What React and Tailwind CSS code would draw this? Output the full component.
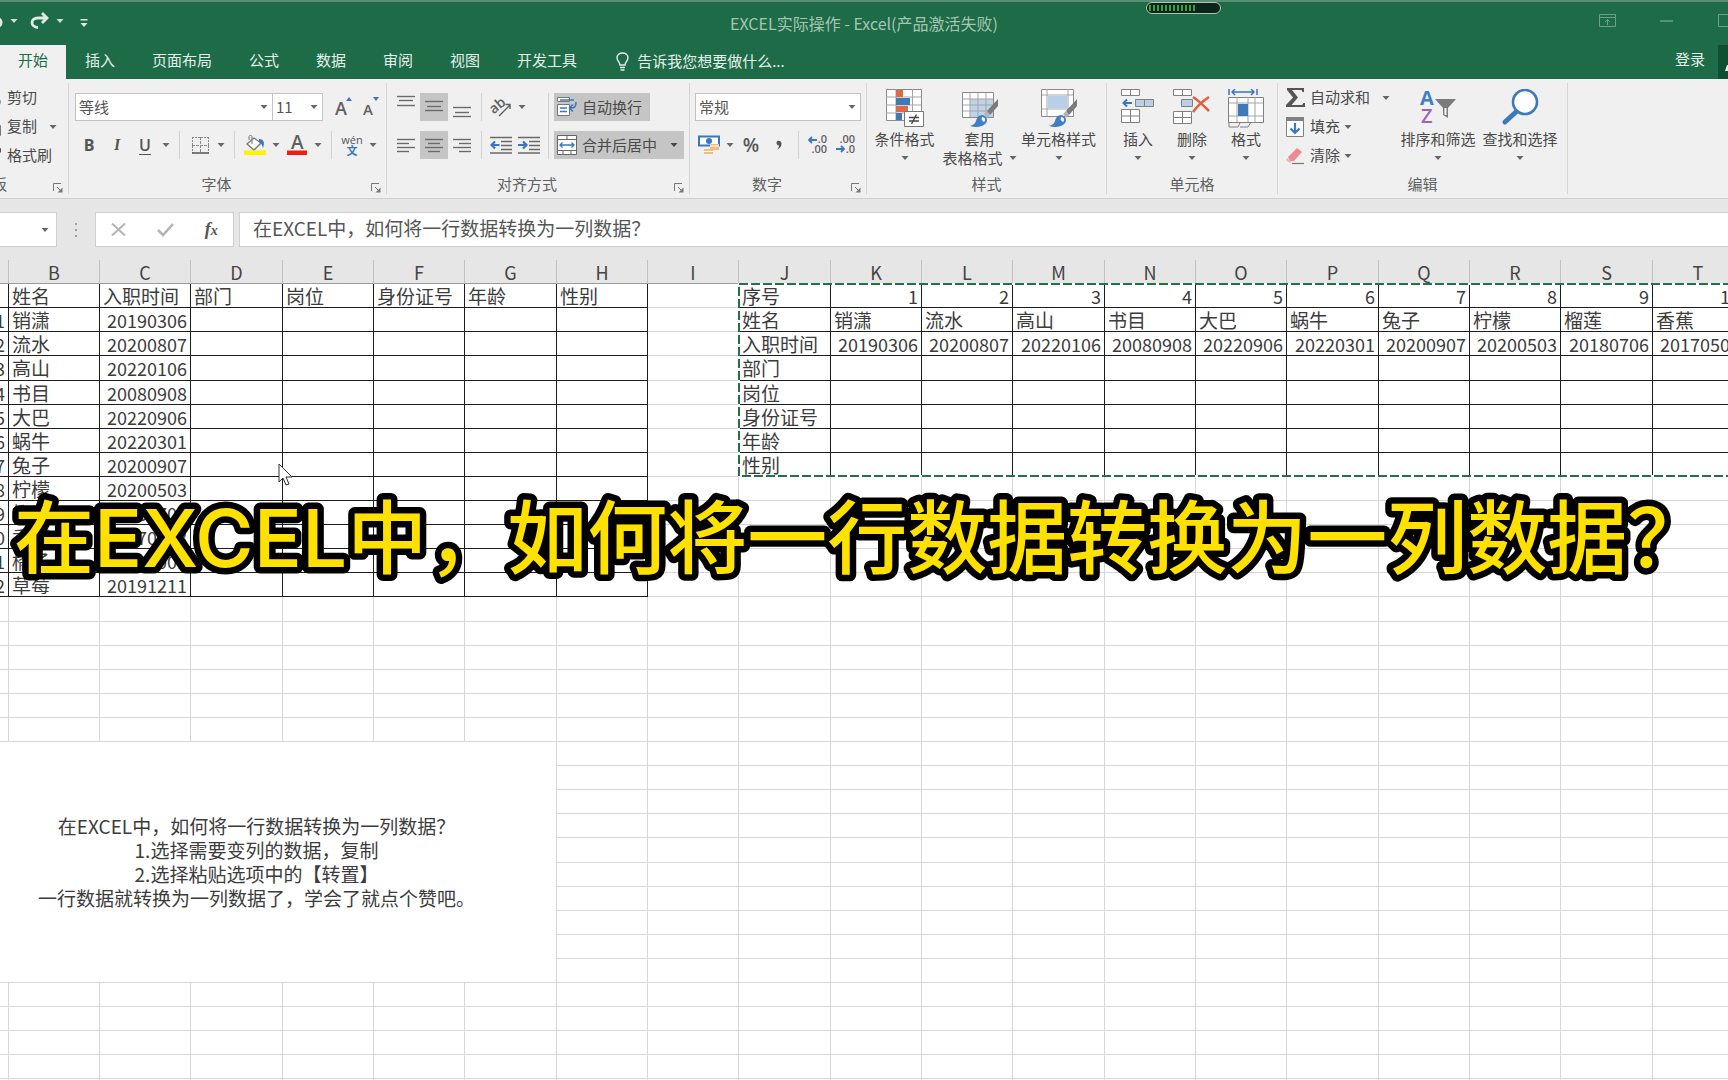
import React, { useState } from 'react';

const UI_FONT = "font-['Noto_Sans_CJK_SC',sans-serif]";

const COLUMNS = 'ABCDEFGHIJKLMNOPQRST'.split('');
// Three columns in a row share 274px
const COLUMN_WIDTHS = ['w-[91px]', 'w-[91px]', 'w-[92px]'];

const FIELDS = ['序号', '姓名', '入职时间', '部门', '岗位', '身份证号', '年龄', '性别'];

const PEOPLE = [
    ['销潇', 20190306],
    ['流水', 20200807],
    ['高山', 20220106],
    ['书目', 20080908],
    ['大巴', 20220906],
    ['蜗牛', 20220301],
    ['兔子', 20200907],
    ['柠檬', 20200503],
    ['榴莲', 20180706],
    ['香蕉', 20170508],
    ['橘子', 20211001],
    ['草莓', 20191211],
];

const ROW_COUNT = 34;
const NOTE_ROW = 19;
const NOTE_ROWS = 10;
const NOTE_COLS = 7;
const RIGHT_START = 9;

const QUESTION = '在EXCEL中，如何将一行数据转换为一列数据？';

const NOTE_LINES = [
    QUESTION,
    '1.选择需要变列的数据，复制',
    '2.选择粘贴选项中的【转置】',
    '一行数据就转换为一列数据了，学会了就点个赞吧。',
];

const TABS = ['开始', '插入', '页面布局', '公式', '数据', '审阅', '视图', '开发工具'];

const getPersonValue = (index, field) => {
    if (index >= PEOPLE.length) return '';
    if (field === 0) return index + 1;
    if (field === 1 || field === 2) return PEOPLE[index][field - 1];
    return '';
};

const getCell = (row, col) => {
    if (row <= PEOPLE.length && col < FIELDS.length) {
        return { framed: true, value: row === 0 ? FIELDS[col] : getPersonValue(row - 1, col) };
    }
    if (row < FIELDS.length && col >= RIGHT_START) {
        return { framed: true, value: col === RIGHT_START ? FIELDS[row] : getPersonValue(col - RIGHT_START - 1, row) };
    }
    return { framed: false, value: '' };
};

/* ---------- Small pieces ---------- */

const Caret = ({ className = 'text-[#666666]' }) => (
    <svg width="8" height="4" viewBox="0 0 8 4" className={`shrink-0 ${className}`} aria-hidden="true">
        <path d="M0.5 0h7L4 4z" fill="currentColor" />
    </svg>
);

const CaretButton = ({ label }) => (
    <button type="button" aria-label={label} className="w-3.5 h-7 flex items-center justify-center">
        <Caret />
    </button>
);

const IconButton = ({ label, active, children }) => (
    <button
        type="button"
        aria-label={label}
        className={`w-7 h-7 shrink-0 flex items-center justify-center text-[#555555] ${active ? 'bg-[#c5c5c5]' : ''}`}
    >
        {children}
    </button>
);

const Separator = ({ className = 'mx-[5px]' }) => <div className={`w-px h-7 bg-[#d2d2d2] ${className}`} />;

const Combo = ({ label, options, className }) => (
    <label className={`relative flex items-center h-7 bg-white border border-[#c3c3c3] ${className}`}>
        <span className="sr-only">{label}</span>
        <select className="appearance-none w-full h-full pl-[3px] text-[15px] leading-6 text-[#555555] bg-transparent outline-none">
            {options.map((o) => (
                <option key={o}>{o}</option>
            ))}
        </select>
        <Caret className="absolute right-1 text-[#666666] pointer-events-none" />
    </label>
);

const Group = ({ title, launcher, className = '', children }) => (
    <section className={`relative shrink-0 flex flex-col my-1 border-r border-[#d5d5d5] ${className}`}>
        <div className="h-[91px]">{children}</div>
        <div className={`h-5 flex items-center justify-center text-[15px] leading-5 text-[#606060] whitespace-nowrap ${launcher ? 'pr-[22px]' : ''}`}>
            {title}
        </div>
        {launcher && (
            <button type="button" aria-label={`${title}设置`} className="absolute right-[5px] bottom-px">
                <svg width="10" height="10" viewBox="0 0 10 10" fill="none" stroke="#777777">
                    <path d="M0.5 8V0.5H8M4 4l4 4" />
                    <path d="M9.5 4.5v5h-5z" fill="#777777" stroke="none" />
                </svg>
            </button>
        )}
    </section>
);

const SmallButton = ({ icon, text, caret }) => (
    <button type="button" className="h-[29px] flex items-center text-[15px] text-[#4a4a4a] whitespace-nowrap">
        <span className="w-6 flex items-center">{icon}</span>
        {text}
        {caret && <span className={caret}><Caret /></span>}
    </button>
);

const BigButton = ({ icon, lines, className }) => (
    <button type="button" className={`flex flex-col items-center pt-1.5 text-[15px] leading-5 text-[#4a4a4a] whitespace-nowrap ${className}`}>
        <span className="h-10">{icon}</span>
        <span>{lines[0]}</span>
        <span className="h-[18px] flex items-center">
            {lines[1] && <span className="mr-1.5">{lines[1]}</span>}
            <Caret />
        </span>
    </button>
);

/* ---------- Icons ---------- */

const Lines = ({ rows }) => (
    <svg width="28" height="28" viewBox="0 0 28 28" stroke="#6a6a6a" strokeWidth="1.4">
        {rows.map(([x1, x2, y]) => (
            <path key={y} d={`M${x1} ${y}.5H${x2}`} />
        ))}
    </svg>
);

const IndentIcon = ({ right }) => (
    <svg width="22" height="18" viewBox="0 0 22 18" fill="none">
        <path d="M0 1.5h22M11 5.5h11M11 9.5h11M11 13.5h11M0 17h22" stroke="#6a6a6a" strokeWidth="1.3" />
        <path d={right ? 'M0 9h8M5 5.5L8.5 9 5 12.5' : 'M9.5 9h-8M5 5.5L1.5 9 5 12.5'} stroke="#3a77bd" strokeWidth="2.2" />
    </svg>
);

const BrushIcon = () => (
    <g>
        <path d="M37 10L26 22l3 4 8-9z" fill="#7b7b7b" />
        <path d="M26 22l-3 3 3 4 3-3z" fill="#b5b5b5" />
        <path d="M22 26c-5 0-6 3-7 6-1 3-3 4-6 5 6 2 13 1 16-3 2-3 1-6-3-8z" fill="#3f7fc4" />
        <path d="M21 28c3 0 4 3 2 5-2-1-3-3-2-5z" fill="#ffffff" />
    </g>
);

const ConditionalIcon = () => (
    <svg width="38" height="39" viewBox="0 0 38 39">
        <path d="M0.5 0.5h35v31h-35z" fill="#ffffff" stroke="#8a8a8a" />
        <path d="M10 0v31M26.5 0v31M0 8h35M0 16h35M0 24h35" stroke="#a5a5a5" fill="none" />
        <path d="M10 1h7v7h-7zM10 17h12v6h-12z" fill="#dd6a44" />
        <path d="M10 9h14v7h-14zM10 24h6v7h-6z" fill="#3f7ab8" />
        <path d="M18.5 22.5h19v15h-19z" fill="#ffffff" stroke="#777777" />
        <path d="M23 28.5h10M23 32h10M30.5 25.5l-5 9.5" stroke="#444444" strokeWidth="1.4" />
    </svg>
);

const TableFormatIcon = () => (
    <svg width="38" height="39" viewBox="0 0 38 39">
        <path d="M1.5 3.5h31v25h-31z" fill="#ffffff" stroke="#8a8a8a" />
        <path d="M9 10h23v18H9z" fill="#bfd3ea" />
        <path d="M9 4v24M17 4v24M25 4v24M2 10h30M2 16h30M2 22h30" stroke="#a5a5a5" fill="none" />
        <BrushIcon />
    </svg>
);

const CellStyleIcon = () => (
    <svg width="38" height="39" viewBox="0 0 38 39">
        <path d="M1.5 0.5h32v27h-32z" fill="#ffffff" stroke="#8a8a8a" />
        <path d="M7 0v27M28 0v27M2 6h31M2 20h31" stroke="#a5a5a5" fill="none" />
        <path d="M8 7h19v12H8z" fill="#b9cfe8" />
        <BrushIcon />
    </svg>
);

const InsertCellsIcon = () => (
    <svg width="36" height="39" viewBox="0 0 36 39" fill="none">
        <path d="M1.5 0.5h18v6h-18zM10.5 0.5v6M1.5 20.5h18v13h-18zM10.5 20.5v13M1.5 27h18" fill="#ffffff" stroke="#808080" />
        <path d="M15.5 10.5h18v7h-18zM24.5 10.5v7" fill="#bccfe6" stroke="#808080" />
        <path d="M12 14H4M7 10.5L3.5 14 7 17.5" stroke="#3a77bd" strokeWidth="2" />
    </svg>
);

const DeleteCellsIcon = () => (
    <svg width="38" height="39" viewBox="0 0 38 39" fill="none">
        <path d="M0.5 0.5h18v6h-18zM9.5 0.5v6M0.5 22.5h18v12h-18zM9.5 22.5v12M0.5 28.5h18" fill="#ffffff" stroke="#808080" />
        <path d="M8.5 10.5h11v7h-11z" fill="#bccfe6" stroke="#808080" />
        <path d="M20 8c5 3 11 9 16 14M36 8c-6 4-11 8-16 15" stroke="#e0603c" strokeWidth="2.6" />
    </svg>
);

const FormatCellsIcon = () => (
    <svg width="38" height="41" viewBox="0 0 38 41" fill="none">
        <path d="M2 0v6M30 0v6" stroke="#3a77bd" strokeWidth="1.5" />
        <path d="M5 3h22M8 0L5 3l3 3M24 0l3 3-3 3" stroke="#3a77bd" strokeWidth="1.5" />
        <path d="M1.5 8.5h35v25h-35z" fill="#ffffff" stroke="#808080" />
        <path d="M10 8v25M21 8v25M28 8v25M2 14h34M2 27h34" stroke="#a5a5a5" />
        <path d="M11 15h10v12H11z" fill="#3f7ab8" />
        <path d="M2 33v5h9l2-4M13 38h8l3-5" stroke="#808080" />
    </svg>
);

const SortFilterIcon = () => (
    <svg width="38" height="39" viewBox="0 0 38 39">
        <text x="1" y="16" fontSize="20" fontWeight="700" fontFamily="Open Sans, sans-serif" fill="#3f7fc4">A</text>
        <text x="2" y="34" fontSize="20" fontWeight="600" fontFamily="Open Sans, sans-serif" fill="#9a63c0">Z</text>
        <path d="M16 10h21l-8 9v10l-5-3v-7z" fill="#7b7b7b" />
        <path d="M25.5 19h2v7h-2z" fill="#ffffff" />
    </svg>
);

const FindIcon = () => (
    <svg width="38" height="39" viewBox="0 0 38 39">
        <path d="M16 22L4 33" stroke="#3f7ab8" strokeWidth="5" strokeLinecap="round" />
        <circle cx="24" cy="13" r="12" fill="#ffffff" stroke="#3f7ab8" strokeWidth="2.6" />
    </svg>
);

const SumIcon = () => (
    <svg width="20" height="20" viewBox="0 0 20 20">
        <path d="M1 0h17v4h-1.5l-1-2H6l6 7.5L5.5 17H16l1.5-2H19v4H0v-2l7-7.5L1 2z" fill="#555555" />
    </svg>
);

const FillIcon = () => (
    <svg width="18" height="20" viewBox="0 0 18 20" fill="none">
        <path d="M0.5 0.5h17v19H0.5z" fill="#ffffff" stroke="#808080" />
        <path d="M0 0h18v4H0z" fill="#808080" />
        <path d="M9 6v10M4.5 11.5L9 16l4.5-4.5" stroke="#3a77bd" strokeWidth="2.2" />
    </svg>
);

const EraserIcon = () => (
    <svg width="18" height="18" viewBox="0 0 18 18">
        <path d="M2 10L11 1l5 4-8 9H4z" fill="#ec8b93" />
        <path d="M1 11l5 4-2 1-4-3z" fill="#f3b4b9" />
        <path d="M6 16.5h12" stroke="#777777" strokeWidth="1.2" />
    </svg>
);

const ScissorsIcon = () => (
    <svg width="18" height="18" viewBox="0 0 18 18" fill="none">
        <path d="M5 0l7 11M12 0L6 11" stroke="#666666" strokeWidth="1.6" />
        <circle cx="4" cy="14" r="3" stroke="#3a77bd" strokeWidth="1.4" />
        <circle cx="14" cy="13" r="3" stroke="#3a77bd" strokeWidth="1.4" />
    </svg>
);

const CopyIcon = () => (
    <svg width="18" height="18" viewBox="0 0 18 18" fill="#ffffff" stroke="#777777">
        <path d="M1.5 0.5h9v12h-9zM7.5 4.5h7l3 3v10h-10z" />
    </svg>
);

const PainterIcon = () => (
    <svg width="18" height="18" viewBox="0 0 18 18">
        <path d="M18 1l-7 4 3 4 4-4z" fill="#555555" />
        <path d="M10 5l4 4-7 8-6-5z" fill="#e8c074" />
    </svg>
);

const PasteIcon = () => (
    <svg width="32" height="38" viewBox="0 0 32 38">
        <path d="M2 4h24v30H2z" fill="#e8c074" />
        <path d="M8 1h12v6H8z" fill="#666666" />
        <path d="M12.5 14.5h17v22h-17z" fill="#ffffff" stroke="#777777" />
    </svg>
);

/* ---------- Sections ---------- */

const TitleBar = () => (
    <div className="relative h-[45px] grid grid-cols-[1fr_auto_1fr] items-center border-t-2 border-[#5c8d76]">
        <div className="flex items-center pb-1.5 text-[#dcebe3]">
            <button type="button" aria-label="撤消" className="-ml-4 w-5">
                <svg width="19" height="17" viewBox="0 0 19 17" fill="none" stroke="currentColor" strokeWidth="2.6">
                    <path d="M7 1L2 6l5 5M2 6h10c7 0 7 9 0 9" />
                </svg>
            </button>
            <button type="button" aria-label="撤消列表" className="w-5 flex justify-center"><Caret className="text-[#cfe0d7]" /></button>
            <button type="button" aria-label="恢复" className="ml-1.5 w-5">
                <svg width="19" height="17" viewBox="0 0 19 17" fill="none" stroke="currentColor" strokeWidth="2.8">
                    <path d="M12 1l5 5-5 5M17 6H8C0 6 0 15 8 15.5" />
                </svg>
            </button>
            <button type="button" aria-label="恢复列表" className="w-5 flex justify-center"><Caret className="text-[#cfe0d7]" /></button>
            <button type="button" aria-label="自定义快速访问工具栏" className="ml-1 w-5 pt-1 flex justify-center">
                <svg width="8" height="8" viewBox="0 0 8 8" fill="currentColor">
                    <path d="M0.5 0h7v1.5h-7zM0.5 4h7L4 8z" />
                </svg>
            </button>
        </div>
        <h1 className="pb-0.5 text-[16px] leading-5 text-[#a5c6b5] whitespace-nowrap">EXCEL实际操作 - Excel(产品激活失败)</h1>
        <div className="flex items-center justify-end pb-1.5 text-[#6aa086]">
            <button type="button" aria-label="功能区显示选项" className="w-[62px] flex justify-center">
                <svg width="17" height="13" viewBox="0 0 17 13" fill="none" stroke="currentColor">
                    <path d="M0.5 0.5h16v12H0.5zM0.5 3.5h16M8.5 11V5.5M6 8l2.5-2.5L11 8" />
                </svg>
            </button>
            <button type="button" aria-label="最小化" className="w-[56px] flex justify-center">
                <svg width="13" height="2" viewBox="0 0 13 2"><path d="M0 1h13" stroke="currentColor" strokeWidth="1.5" /></svg>
            </button>
            <button type="button" aria-label="最大化" className="w-[38px] -mr-1 flex justify-end">
                <svg width="14" height="13" viewBox="0 0 14 13" fill="none" stroke="currentColor"><path d="M0.5 0.5h13v12H0.5z" /></svg>
            </button>
        </div>
        {/* Recording level */}
        <div className="absolute top-0 left-[1146px] w-[75px] h-3 p-0.5 rounded-md border border-[#a9c8b8] bg-[#0b2619]">
            <div className="w-12 h-full bg-[repeating-linear-gradient(90deg,#3f9c4c_0px,#3f9c4c_2px,#0b2619_2px,#0b2619_4px)]" />
        </div>
    </div>
);

const TabBar = ({ active, onSelect }) => (
    <nav className="flex items-stretch justify-between h-[34px] text-[15px] leading-5 text-[#e4f0ea]">
        <div className="flex gap-px">
            {TABS.map((tab) => (
                <button
                    key={tab}
                    type="button"
                    onClick={() => onSelect(tab)}
                    className={`px-[18px] pb-1 whitespace-nowrap ${active === tab ? 'bg-[#f0f0f0] text-[#1e6b47]' : ''}`}
                >
                    {tab}
                </button>
            ))}
            <button type="button" className="flex items-center gap-2 pl-5 pb-0.5 whitespace-nowrap">
                <svg width="13" height="19" viewBox="0 0 13 19" fill="none" stroke="currentColor" strokeWidth="1.4">
                    <path d="M4 13c0-3-3-4-3-7.5C1 3 3.5 1 6.5 1S12 3 12 5.5C12 9 9 10 9 13zM4 15.5h5M4.5 18h4" />
                </svg>
                告诉我您想要做什么...
            </button>
        </div>
        <div className="flex items-stretch">
            <a href="#login" className="px-[13px] pt-1">登录</a>
            <button type="button" aria-label="共享" className="w-2.5 bg-[#0c5030] flex items-end justify-end pb-2 overflow-hidden">
                <svg width="3" height="6" viewBox="0 0 3 6"><path d="M0 6L2 0h1v6z" fill="#e4f0ea" /></svg>
            </button>
        </div>
    </nav>
);

const Ribbon = () => (
    <div className="flex bg-[#f0f0f0] h-[120px] border-b border-[#d0d0d0] overflow-hidden">
        <Group title="剪贴板" launcher className="w-[146px] -ml-[77px]">
            <div className="flex">
                <BigButton icon={<PasteIcon />} lines={['粘贴']} className="w-[60px]" />
                <div>
                    <SmallButton icon={<ScissorsIcon />} text="剪切" />
                    <SmallButton icon={<CopyIcon />} text="复制" caret="ml-3" />
                    <SmallButton icon={<PainterIcon />} text="格式刷" />
                </div>
            </div>
        </Group>

        <Group title="字体" launcher className="w-[318px]">
            <div className="pt-2.5 pl-1.5">
                <div className="flex items-center">
                    <Combo label="字体" options={['等线']} className="w-[200px]" />
                    <Combo label="字号" options={['11']} className="w-[51px] -ml-px" />
                    <button type="button" aria-label="增大字号" className="ml-2 w-7 h-7 flex items-center justify-center">
                        <svg width="18" height="20" viewBox="0 0 18 20">
                            <text x="0" y="18" fontSize="18" fontFamily="Open Sans, sans-serif" fontWeight="600" fill="#606060">A</text>
                            <path d="M11 4l3-4 3 4z" fill="#3a77bd" />
                        </svg>
                    </button>
                    <button type="button" aria-label="减小字号" className="w-7 h-7 flex items-center justify-center">
                        <svg width="18" height="20" viewBox="0 0 18 20">
                            <text x="0" y="18" fontSize="15" fontFamily="Open Sans, sans-serif" fontWeight="600" fill="#606060">A</text>
                            <path d="M10 0h6l-3 4z" fill="#3a77bd" />
                        </svg>
                    </button>
                </div>
                <div className="flex items-center mt-2.5 font-['Open_Sans',sans-serif] text-[16px]">
                    <IconButton label="加粗"><b>B</b></IconButton>
                    <IconButton label="倾斜"><i className="font-['Liberation_Serif',serif] font-bold">I</i></IconButton>
                    <IconButton label="下划线"><span className="underline underline-offset-3 font-semibold">U</span></IconButton>
                    <CaretButton label="下划线样式" />
                    <Separator className="mx-1.5" />
                    <IconButton label="边框">
                        <svg width="17" height="17" viewBox="0 0 17 17" fill="none" stroke="#8a8a8a">
                            <path d="M0.5 0v16M16.5 0v16M0 0.5h17" strokeDasharray="2 1" />
                            <path d="M8.5 0v16M0 8.5h17" strokeDasharray="3 1" />
                            <path d="M0 16h17" stroke="#555555" strokeWidth="1.5" />
                        </svg>
                    </IconButton>
                    <CaretButton label="边框样式" />
                    <Separator className="mx-1.5" />
                    <IconButton label="填充颜色">
                        <svg width="22" height="20" viewBox="0 0 22 20">
                            <path d="M3 9l7-6 7 5-7 7z" fill="#ffffff" stroke="#777777" strokeWidth="1.3" />
                            <path d="M8 9V1.5C8 0 5 0 5 1.5V5" fill="none" stroke="#777777" />
                            <path d="M15 4c5 0 6 4 4 9-1-3-1-4-4-6z" fill="#3a77bd" />
                            <path d="M0 15.5h22V20H0z" fill="#fff100" />
                        </svg>
                    </IconButton>
                    <CaretButton label="选择填充颜色" />
                    <IconButton label="字体颜色">
                        <svg width="22" height="20" viewBox="0 0 22 20">
                            <text x="5" y="14" fontSize="19" fontFamily="Open Sans, sans-serif" fontWeight="600" fill="#606060">A</text>
                            <path d="M1 15.5h20V20H1z" fill="#f01e0e" />
                        </svg>
                    </IconButton>
                    <CaretButton label="选择字体颜色" />
                    <Separator className="mx-1.5" />
                    <IconButton label="拼音">
                        <span className="flex flex-col items-center">
                            <span className="text-[11px] leading-[10px]">wén</span>
                            <span className="text-[11px] leading-[11px] font-bold text-[#3a77bd] font-['Noto_Sans_CJK_SC',sans-serif]">文</span>
                        </span>
                    </IconButton>
                    <CaretButton label="拼音选项" />
                </div>
            </div>
        </Group>

        <Group title="对齐方式" launcher className="w-[303px]">
            <div className="flex items-center pt-2.5 pl-[5px]">
                <div>
                    <div className="flex items-center">
                        <IconButton label="顶端对齐"><Lines rows={[[5, 23, 3], [7, 21, 7], [5, 23, 12]]} /></IconButton>
                        <IconButton label="垂直居中" active><Lines rows={[[5, 23, 8], [7, 21, 13], [5, 23, 17]]} /></IconButton>
                        <IconButton label="底端对齐"><Lines rows={[[5, 23, 14], [7, 21, 19], [5, 23, 23]]} /></IconButton>
                        <Separator />
                        <IconButton label="方向">
                            <svg width="22" height="20" viewBox="0 0 22 20">
                                <text x="0" y="13" fontSize="14" fontFamily="Open Sans, sans-serif" fontWeight="600" fill="#606060" transform="rotate(-40 8 10)">ab</text>
                                <path d="M9 19L20 8M20 12V7.5h-4.5" stroke="#606060" strokeWidth="1.4" fill="none" />
                            </svg>
                        </IconButton>
                        <CaretButton label="方向选项" />
                    </div>
                    <div className="flex items-center mt-2.5">
                        <IconButton label="左对齐"><Lines rows={[[5, 23, 8], [5, 17, 12], [5, 23, 16], [5, 17, 20]]} /></IconButton>
                        <IconButton label="居中" active><Lines rows={[[5, 23, 8], [8, 20, 12], [5, 23, 16], [8, 20, 20]]} /></IconButton>
                        <IconButton label="右对齐"><Lines rows={[[5, 23, 8], [11, 23, 12], [5, 23, 16], [11, 23, 20]]} /></IconButton>
                        <Separator />
                        <IconButton label="减少缩进量"><IndentIcon /></IconButton>
                        <IconButton label="增加缩进量"><IndentIcon right /></IconButton>
                    </div>
                </div>
                <div className="w-px h-[66px] mx-[5px] bg-[#d2d2d2]" />
                <div className="text-[15px] leading-5 text-[#4a4a4a] whitespace-nowrap">
                    <button type="button" className="h-7 pl-[3px] pr-2 flex items-center gap-[5px] bg-[#c5c5c5]">
                        <svg width="20" height="20" viewBox="0 0 20 20" fill="none">
                            <path d="M0.5 0.5h12v4h-12zM0.5 7.5h12v11h-12z" fill="#ffffff" stroke="#777777" />
                            <path d="M3 3h14M3 11h7M3 14.5h7" stroke="#3a77bd" strokeWidth="1.4" />
                            <path d="M19 5c0 5-1 6-6 6M16 7.5L12.5 11l3.5 3.5" stroke="#3a77bd" strokeWidth="1.6" />
                        </svg>
                        自动换行
                    </button>
                    <button type="button" className="h-7 mt-2.5 pl-[3px] pr-1.5 flex items-center gap-[5px] bg-[#c5c5c5]">
                        <svg width="20" height="20" viewBox="0 0 20 20" fill="none">
                            <path d="M0.5 0.5h19v19H0.5z" fill="#ffffff" stroke="#666666" />
                            <path d="M0 4.5h20M0 15.5h20M10 0v4M6 16v4M14 16v4" stroke="#666666" />
                            <path d="M3 10h14M5.5 7.5L3 10l2.5 2.5M14.5 7.5L17 10l-2.5 2.5" stroke="#3a77bd" strokeWidth="1.3" />
                        </svg>
                        合并后居中
                        <span className="pl-2"><Caret className="text-[#444444]" /></span>
                    </button>
                </div>
            </div>
        </Group>

        <Group title="数字" launcher className="w-[177px]">
            <div className="pt-2.5 px-[5px]">
                <Combo label="数字格式" options={['常规']} className="w-full" />
                <div className="flex items-center mt-2.5">
                    <IconButton label="会计数字格式">
                        <svg width="22" height="20" viewBox="0 0 22 20">
                            <path d="M1 1.5h20v9H1z" fill="#ffffff" stroke="#3a77bd" strokeWidth="2" />
                            <circle cx="11" cy="6" r="3" fill="#3a77bd" />
                            <path d="M12 9h9v6h-9zM6 14h9v5H6z" fill="#eebf7c" />
                            <path d="M12 11h9M6 16.5h9" stroke="#ffffff" />
                        </svg>
                    </IconButton>
                    <CaretButton label="货币选项" />
                    <IconButton label="百分比样式"><span className="text-[19px] font-semibold font-['Open_Sans',sans-serif]">%</span></IconButton>
                    <IconButton label="千位分隔样式">
                        <svg width="6" height="10" viewBox="0 0 6 10"><path d="M0.5 2.5C0.5 0 5.5 0 5.5 3.5 5.5 7 3 9 1 9.5 2.5 8 3 7 3 5.5 1.5 5.5 0.5 4.5 0.5 2.5z" fill="#555555" /></svg>
                    </IconButton>
                    <Separator />
                    {['增加小数位数', '减少小数位数'].map((label, i) => (
                        <IconButton key={label} label={label}>
                            <svg width="20" height="20" viewBox="0 0 20 20" fontSize="11" fontFamily="Open Sans, sans-serif" fontWeight="600" fill="#606060">
                                <text x="19" y="8" textAnchor="end">{i ? '.00' : '.0'}</text>
                                <text x="19" y="18" textAnchor="end">{i ? '.0' : '.00'}</text>
                                <path
                                    d={i ? 'M0 14h8M5 11l3 3-3 3' : 'M9 5H1M4 2L1 5l3 3'}
                                    stroke="#3a77bd"
                                    strokeWidth="1.8"
                                    fill="none"
                                />
                            </svg>
                        </IconButton>
                    ))}
                </div>
            </div>
        </Group>

        <Group title="样式" className="w-[240px]">
            <div className="flex items-start">
                <BigButton icon={<ConditionalIcon />} lines={['条件格式']} className="w-[75px]" />
                <BigButton icon={<TableFormatIcon />} lines={['套用', '表格格式']} className="w-[75px]" />
                <BigButton icon={<CellStyleIcon />} lines={['单元格样式']} className="w-[83px]" />
            </div>
        </Group>

        <Group title="单元格" className="w-[171px]">
            <div className="flex items-start pl-1">
                <BigButton icon={<InsertCellsIcon />} lines={['插入']} className="w-[54px]" />
                <BigButton icon={<DeleteCellsIcon />} lines={['删除']} className="w-[54px]" />
                <BigButton icon={<FormatCellsIcon />} lines={['格式']} className="w-[54px]" />
            </div>
        </Group>

        <Group title="编辑" className="w-[290px]">
            <div className="flex items-start pl-2">
                <div className="w-[111px]">
                    <SmallButton icon={<SumIcon />} text="自动求和" caret="ml-3" />
                    <SmallButton icon={<FillIcon />} text="填充" caret="ml-1" />
                    <SmallButton icon={<EraserIcon />} text="清除" caret="ml-1" />
                </div>
                <BigButton icon={<SortFilterIcon />} lines={['排序和筛选']} className="w-[82px]" />
                <BigButton icon={<FindIcon />} lines={['查找和选择']} className="w-[82px]" />
            </div>
        </Group>
    </div>
);

const FormulaBar = () => {
    const [value, setValue] = useState(QUESTION);

    return (
        <div className="flex items-stretch h-[61px] py-[13px] bg-[#e6e6e6]">
            <button type="button" aria-label="名称框" className="w-[57px] flex items-center justify-end pr-[7px] bg-white border border-l-0 border-[#cfcfcf]">
                <Caret />
            </button>
            <div className="w-[38px] flex flex-col items-center justify-center gap-1">
                <span className="w-0.5 h-0.5 bg-[#a0a0a0]" />
                <span className="w-0.5 h-0.5 bg-[#a0a0a0]" />
                <span className="w-0.5 h-0.5 bg-[#a0a0a0]" />
            </div>
            <div className="w-[139px] flex items-center justify-around bg-white border border-[#cfcfcf]">
                <button type="button" aria-label="取消">
                    <svg width="15" height="13" viewBox="0 0 15 13" stroke="#b5b5b5" strokeWidth="2"><path d="M1 0.5l13 12M14 0.5l-13 12" /></svg>
                </button>
                <button type="button" aria-label="输入">
                    <svg width="17" height="14" viewBox="0 0 17 14" fill="none" stroke="#b5b5b5" strokeWidth="2.6"><path d="M1 7l5 5L16 1" /></svg>
                </button>
                <button type="button" aria-label="插入函数" className="font-['Liberation_Serif',serif] font-bold italic text-[18px] leading-5 text-[#555555]">
                    f<span className="text-[14px]">x</span>
                </button>
            </div>
            <input
                aria-label="编辑栏"
                value={value}
                onChange={(e) => setValue(e.target.value)}
                className="flex-1 min-w-0 ml-[5px] pl-[13px] pb-0.5 bg-white border border-r-0 border-[#cfcfcf] text-[19px] text-[#555555] outline-none"
            />
        </div>
    );
};

const Sheet = () => (
    <div className="relative -ml-[43px]">
        <table className="table-fixed w-[1786px] border-separate border-spacing-0 bg-white text-[#3c3c3c]">
            <colgroup>
                <col className="w-[52px]" />
                {COLUMNS.slice(1).map((letter, i) => (
                    <col key={letter} className={COLUMN_WIDTHS[i % 3]} />
                ))}
            </colgroup>
            <thead>
                <tr className="h-6 bg-[#e6e6e6]">
                    {COLUMNS.map((letter) => (
                        <th key={letter} scope="col" className="p-0 border-r border-b border-r-[#c0c0c0] border-b-[#9c9c9c] font-normal text-[18px] leading-[22px] text-[#444444]">
                            {letter}
                        </th>
                    ))}
                </tr>
            </thead>
            <tbody>
                {Array.from({ length: ROW_COUNT }, (_, row) => (
                    <tr key={row} className={row % 10 === 3 ? 'h-[25px]' : 'h-6'}>
                        {COLUMNS.map((letter, col) => {
                            const inNote = row >= NOTE_ROW && row < NOTE_ROW + NOTE_ROWS && col < NOTE_COLS;
                            if (inNote) {
                                if (row !== NOTE_ROW || col !== 0) return null;
                                return (
                                    <td key={letter} colSpan={NOTE_COLS} rowSpan={NOTE_ROWS} className="p-0 border-r border-b border-[#d6d6d6] text-center text-[19px] leading-6 whitespace-nowrap">
                                        {NOTE_LINES.map((line) => (
                                            <p key={line}>{line}</p>
                                        ))}
                                    </td>
                                );
                            }
                            const { framed, value } = getCell(row, col);
                            const isNumber = typeof value === 'number';
                            return (
                                <td
                                    key={letter}
                                    className={`px-[3px] py-0 border-r border-b leading-[22px] whitespace-nowrap ${framed ? 'border-[#1c1c1c]' : 'border-[#d6d6d6]'} ${isNumber ? 'text-right text-[18px]' : 'text-[19px]'}`}
                                >
                                    {value}
                                </td>
                            );
                        })}
                    </tr>
                ))}
            </tbody>
        </table>

        {/* Copied range */}
        <svg className="absolute left-[781px] top-[23px] w-[1010px] h-[195px] pointer-events-none" fill="none">
            <rect x="1" y="1" width="1020" height="192" stroke="#ffffff" strokeWidth="2" />
            <rect x="1" y="1" width="1020" height="192" stroke="#217346" strokeWidth="2" strokeDasharray="9 3" />
        </svg>

        {/* Mouse pointer */}
        <svg className="absolute left-[321px] top-[203px]" width="16" height="24" viewBox="0 0 16 24">
            <path d="M1 1v18l4-4 3 7 3-1-3-7h6z" fill="#ffffff" stroke="#333333" />
        </svg>
    </div>
);

// Outlined subtitle over the sheet
const Caption = () => (
    <svg className="absolute left-0 top-[480px] w-full h-[110px] pointer-events-none overflow-visible">
        <text
            x="14"
            y="87"
            fontSize="80"
            fontWeight="500"
            fontFamily="Inter, 'Noto Sans CJK SC', sans-serif"
            fill="#ffe100"
            stroke="#000000"
            strokeWidth="13"
            strokeLinejoin="round"
            paintOrder="stroke"
        >
            {QUESTION}
        </text>
    </svg>
);

const App = () => {
    const [activeTab, setActiveTab] = useState('开始');

    return (
        <div className={`relative h-screen w-full overflow-hidden flex flex-col bg-white ${UI_FONT}`}>
            <header className="shrink-0 bg-[#1e6b47]">
                <TitleBar />
                <TabBar active={activeTab} onSelect={setActiveTab} />
            </header>
            <div className="shrink-0">
                <Ribbon />
                <FormulaBar />
            </div>
            <main className="flex-1 min-h-0 overflow-hidden">
                <Sheet />
            </main>
            <Caption />
        </div>
    );
};

export default App;
